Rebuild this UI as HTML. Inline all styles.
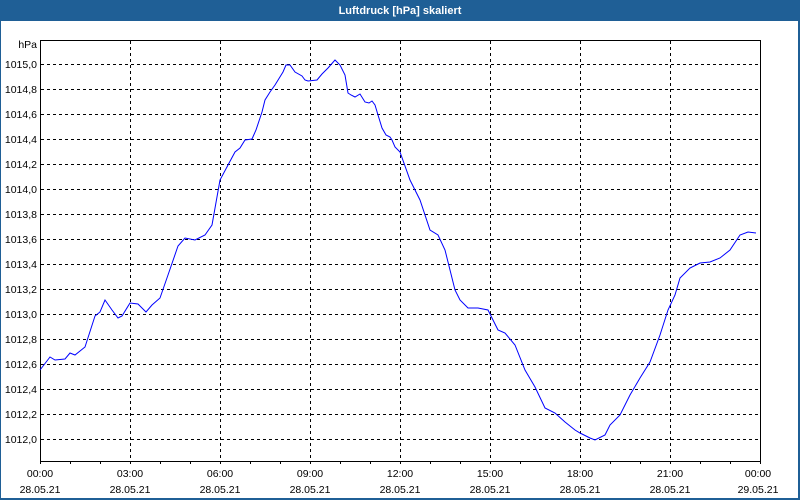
<!DOCTYPE html>
<html><head><meta charset="utf-8"><style>
html,body{margin:0;padding:0;width:800px;height:500px;overflow:hidden;background:#fff}
</style></head><body>
<svg width="800" height="500" xmlns="http://www.w3.org/2000/svg" font-family="Liberation Sans, DejaVu Sans, sans-serif" font-size="10.5">
<rect x="0" y="0" width="800" height="500" fill="#1f5f96"/>
<rect x="1" y="21" width="797" height="477" fill="#fff"/>
<text x="400" y="14" fill="#fff" font-weight="bold" font-size="11" text-anchor="middle">Luftdruck [hPa] skaliert</text>
<g stroke="#000" stroke-width="1" stroke-dasharray="3,3" shape-rendering="crispEdges">
<line x1="130.5" y1="41" x2="130.5" y2="461"/><line x1="220.5" y1="41" x2="220.5" y2="461"/>
<line x1="310.5" y1="41" x2="310.5" y2="461"/><line x1="400.5" y1="41" x2="400.5" y2="461"/>
<line x1="490.5" y1="41" x2="490.5" y2="461"/><line x1="580.5" y1="41" x2="580.5" y2="461"/>
<line x1="670.5" y1="41" x2="670.5" y2="461"/>
<line x1="41" y1="64.5" x2="760" y2="64.5"/><line x1="41" y1="89.5" x2="760" y2="89.5"/>
<line x1="41" y1="114.5" x2="760" y2="114.5"/><line x1="41" y1="139.5" x2="760" y2="139.5"/>
<line x1="41" y1="164.5" x2="760" y2="164.5"/><line x1="41" y1="189.5" x2="760" y2="189.5"/>
<line x1="41" y1="214.5" x2="760" y2="214.5"/><line x1="41" y1="239.5" x2="760" y2="239.5"/>
<line x1="41" y1="264.5" x2="760" y2="264.5"/><line x1="41" y1="289.5" x2="760" y2="289.5"/>
<line x1="41" y1="314.5" x2="760" y2="314.5"/><line x1="41" y1="339.5" x2="760" y2="339.5"/>
<line x1="41" y1="364.5" x2="760" y2="364.5"/><line x1="41" y1="389.5" x2="760" y2="389.5"/>
<line x1="41" y1="414.5" x2="760" y2="414.5"/><line x1="41" y1="439.5" x2="760" y2="439.5"/>
</g>
<g stroke="#000" stroke-width="1" shape-rendering="crispEdges" fill="none">
<path d="M40.5 40 V461.5 H760.5 V40 M40 40.5 H760"/>
<path d="M40.5 461 v3 M70.5 461 v3 M100.5 461 v3 M130.5 461 v3 M160.5 461 v3 M190.5 461 v3 M220.5 461 v3 M250.5 461 v3 M280.5 461 v3 M310.5 461 v3 M340.5 461 v3 M370.5 461 v3 M400.5 461 v3 M430.5 461 v3 M460.5 461 v3 M490.5 461 v3 M520.5 461 v3 M550.5 461 v3 M580.5 461 v3 M610.5 461 v3 M640.5 461 v3 M670.5 461 v3 M700.5 461 v3 M730.5 461 v3 M760.5 461 v3"/>
</g>
<g fill="#000" text-anchor="end">
<text x="37" y="48">hPa</text>
<text x="37" y="68">1015,0</text><text x="37" y="93">1014,8</text><text x="37" y="118">1014,6</text>
<text x="37" y="143">1014,4</text><text x="37" y="168">1014,2</text><text x="37" y="193">1014,0</text>
<text x="37" y="218">1013,8</text><text x="37" y="243">1013,6</text><text x="37" y="268">1013,4</text>
<text x="37" y="293">1013,2</text><text x="37" y="318">1013,0</text><text x="37" y="343">1012,8</text>
<text x="37" y="368">1012,6</text><text x="37" y="393">1012,4</text><text x="37" y="418">1012,2</text>
<text x="37" y="443">1012,0</text>
</g>
<g fill="#000" text-anchor="middle">
<text x="40" y="477">00:00</text><text x="40" y="493">28.05.21</text>
<text x="130" y="477">03:00</text><text x="130" y="493">28.05.21</text>
<text x="220" y="477">06:00</text><text x="220" y="493">28.05.21</text>
<text x="310" y="477">09:00</text><text x="310" y="493">28.05.21</text>
<text x="400" y="477">12:00</text><text x="400" y="493">28.05.21</text>
<text x="490" y="477">15:00</text><text x="490" y="493">28.05.21</text>
<text x="580" y="477">18:00</text><text x="580" y="493">28.05.21</text>
<text x="670" y="477">21:00</text><text x="670" y="493">28.05.21</text>
<text x="758" y="477">00:00</text><text x="758" y="493">29.05.21</text>
</g>
<polyline fill="none" stroke="#0000ff" stroke-width="1" points="40,370 50,357 55,360 65,359 70,353 75,355 85,347 95,316 100,312 105,300 112,310 118,318 122,316 130,303 138,304 146,312 152,305 160,298 168,275 178,246 185,238 195,240 205,235 212,225 220,180 228,165 235,152 240,148 245,140 252,139 256,130 262,112 265,100 270,92 275,85 283,72 286,65 290,65 295,72 302,76 305,80 308,81 317,80 322,74 328,68 335,60 340,65 345,75 348,93 351,95 355,97 360,94 365,102 369,103 372,101 375,105 378,115 382,128 386,135 390,137 392,140 395,147 400,152 410,180 420,200 430,230 438,235 445,250 455,290 460,300 468,308 478,308 488,310 492,318 498,330 505,333 515,345 525,370 535,387 545,408 555,413 565,422 575,430 580,433 590,438 595,440 605,435 610,425 620,415 630,395 640,378 650,362 660,335 668,310 675,295 680,278 690,268 700,263 710,262 720,258 730,250 740,235 748,232 756,233"/>
</svg>
</body></html>
